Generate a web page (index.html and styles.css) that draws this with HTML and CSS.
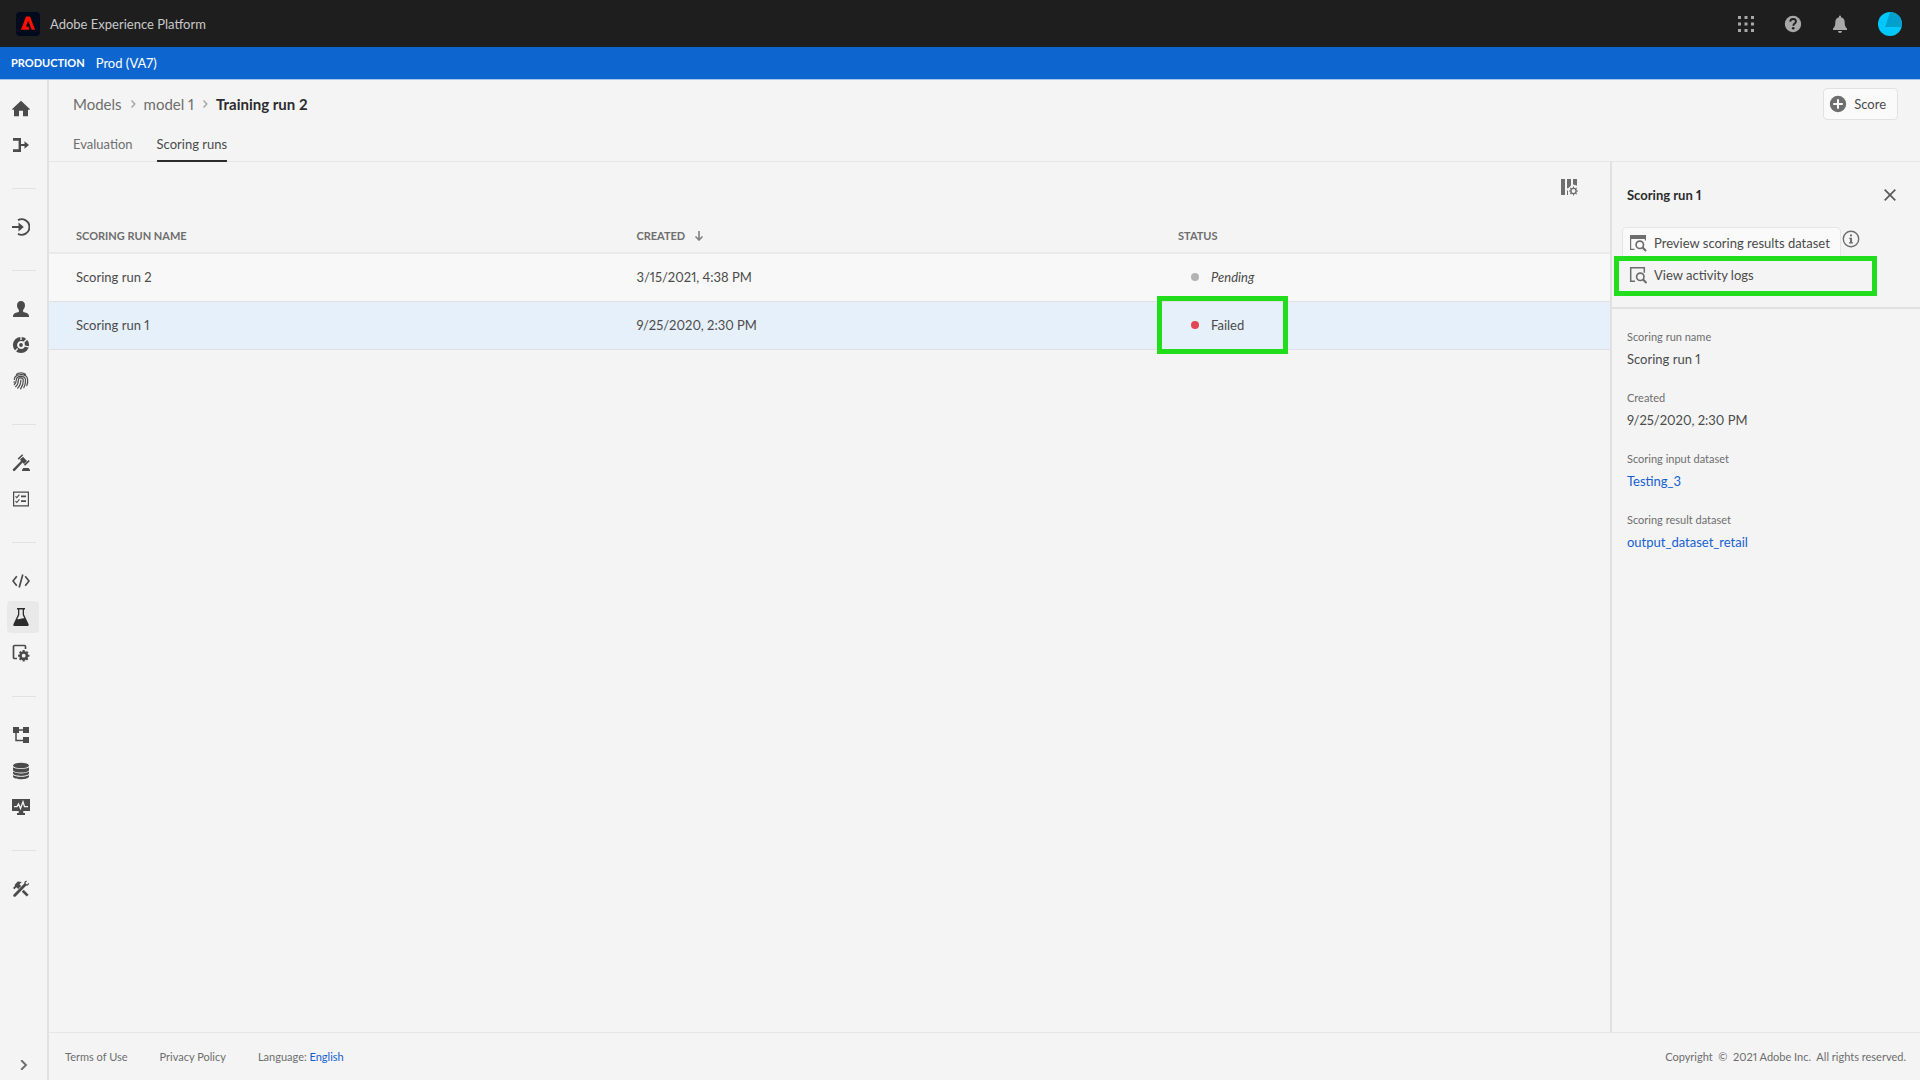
FILE: index.html
```html
<!DOCTYPE html>
<html lang="en">
<head>
    <meta charset="UTF-8" />
    <meta name="viewport" content="width=device-width, initial-scale=1" />
    <title>Adobe Experience Platform</title>
    <link rel="stylesheet" href="styles.css">
</head>
<body>
    <header class="topbar">
        <svg class="logo" viewBox="0 0 24 24" width="24" height="24">
            <rect width="24" height="24" rx="4" fill="#000b1d" />
            <path d="M10 4.500h4l5.200 13.200h-3.600l-3.400-8.900-2.200 5.700h2.300l1.100 3.200H4.900z" fill="#fa0f00" />
        </svg>
        <span class="product">Adobe Experience Platform</span>
        <div class="tools">
            <button class="tool" aria-label="Apps">
                <svg viewBox="0 0 18 18" width="18" height="18">
                    <path d="M1 1h3v3H1zM7.500 1h3v3h-3zM14 1h3v3h-3zM1 7.500h3v3H1zM7.500 7.500h3v3h-3zM14 7.500h3v3h-3zM1 14h3v3H1zM7.500 14h3v3h-3zM14 14h3v3h-3z" />
                </svg>
            </button>
            <button class="tool" aria-label="Help">
                <svg viewBox="0 0 18 18" width="18" height="18">
                    <circle cx="9" cy="9" r="8.200" />
                    <path d="M6.200 6.600C6.400 4.900 7.500 4 9.100 4c1.700 0 2.800 1 2.800 2.400 0 2.100-2.600 2.100-2.600 4.300" fill="none" stroke="#1e1e1e" stroke-width="1.900" />
                    <circle cx="9.200" cy="13.300" r="1.300" fill="#1e1e1e" />
                </svg>
            </button>
            <button class="tool" aria-label="Notifications">
                <svg viewBox="0 0 18 18" width="18" height="18">
                    <path d="M8 1.600a1 1 0 0 1 2 0v.7c2.600.5 3.700 2.500 3.700 5.200 0 3.500.9 4.800 2.300 6v1.400H2v-1.400c1.400-1.200 2.300-2.500 2.300-6 0-2.700 1.100-4.700 3.700-5.200zM7 16h4a2 2 0 0 1-4 0z" />
                </svg>
            </button>
            <button class="tool" aria-label="Account">
                <svg viewBox="0 0 24 24" width="24" height="24">
                    <circle cx="12" cy="12" r="12" fill="#00c8ff" />
                    <path d="M12.200 0A12 12 0 0 1 23.600 15L7 15z" fill="#009fcc" />
                </svg>
            </button>
        </div>
    </header>

    <div class="sandbox">
        <span class="sandbox-type">PRODUCTION</span>
        <span class="sandbox-name">Prod (VA7)</span>
    </div>

    <div class="shell">
        <nav class="rail" aria-label="Main">
            <a class="rail-item" href="#" aria-label="Home">
                <svg viewBox="0 0 18 18" width="18" height="18"><path d="M9 .7l8.800 8.200c.3.300.1.800-.3.800H16v6.600h-5v-5.500H7v5.500H2V9.700H.5c-.4 0-.6-.5-.3-.8z" /></svg>
            </a>
            <a class="rail-item" href="#" aria-label="Workflows">
                <svg viewBox="0 0 18 18" width="18" height="18"><path d="M1 2h8v5.900h3.500V5.200L17 9l-4.500 3.800v-2.700H9V16H1v-2.700h5.600V4.700H1z" /></svg>
            </a>
            <hr class="rail-line">
            <a class="rail-item" href="#" aria-label="Sources">
                <svg viewBox="0 0 18 18" width="18" height="18"><path d="M6 2.100a7.800 7.800 0 1 1 0 13.800" fill="none" stroke="#4b4b4b" stroke-width="1.900" /><path d="M0 8.100h6.500V4.600L11.800 9l-5.300 4.400V9.900H0z" /></svg>
            </a>
            <hr class="rail-line">
            <a class="rail-item" href="#" aria-label="Profiles">
                <svg viewBox="0 0 18 18" width="18" height="18"><path d="M9 1c2.500 0 4 1.700 4 4.300 0 2-.9 3.600-1.900 4.600v1.300c0 .6.300.9 1 1.100 3 .7 4.900 1.700 4.900 3.700v1H1v-1c0-2 1.900-3 4.900-3.700.7-.2 1-.5 1-1.100V9.900C5.900 8.900 5 7.300 5 5.300 5 2.700 6.500 1 9 1z" /></svg>
            </a>
            <a class="rail-item" href="#" aria-label="Segments">
                <svg viewBox="0 0 18 18" width="18" height="18"><circle cx="9" cy="9" r="6" fill="none" stroke="#4b4b4b" stroke-width="4.200" /><circle cx="9" cy="9" r="1.900" /><path d="M9 4V0M10.800 7.200L16 2M12 9.800l5.500 1.300M5.700 12.500L2.500 16" stroke="#f4f4f4" stroke-width="1.300" /></svg>
            </a>
            <a class="rail-item" href="#" aria-label="Identities">
                <svg viewBox="0 0 18 18" width="18" height="18"><g fill="none" stroke="#4b4b4b" stroke-width="1.200" stroke-linecap="round"><path d="M4.500 2.300C7 .4 11 .4 13.500 2.300M2.300 7.500C2.800 1.400 14.600.8 15.600 7.300c.3 2.300 0 4.200-.8 6.300M2.300 12.500c1.800-1.600 2-3.200 2.100-5 .4-4.200 8.600-4.400 9.100.2.200 3-.4 5.400-1.700 8M3.600 14.700c2.300-2 2.800-4.300 2.800-7 .2-2.300 4.600-2.500 4.900.3.200 3.500-.9 6.300-2.700 8.900M5.700 16.200C8 13.800 8.900 11.200 8.900 8M2 10.300l.3-.5" /></g></svg>
            </a>
            <hr class="rail-line">
            <a class="rail-item" href="#" aria-label="Policies">
                <svg viewBox="0 0 18 18" width="18" height="18"><path d="M8 5.500l3-2.800 4 4.300-3 2.900-1.400-1.500-7.700 8.300c-1.200 1.200-2.900-.4-1.800-1.600L9 7z" /><path d="M6.200 5.100L10.700.8M12.500 11.100l4.700-4.500" stroke="#4b4b4b" stroke-width="1.500" /><path d="M10 17v-1.300L11.300 14h5.200l1.500 1.700V17z" /></svg>
            </a>
            <a class="rail-item" href="#" aria-label="Audits">
                <svg viewBox="0 0 18 18" width="18" height="18"><path d="M1.600 2.100h14.800v13.800H1.600z" fill="none" stroke="#4b4b4b" stroke-width="1.200" /><path d="M9 5.500h5v1.800H9zM9 10.300h5v1.800H9z" /><path d="M3.500 6.400l1.300 1.300L7.400 4.600M3.500 11.200l1.300 1.300 2.600-3.100" fill="none" stroke="#4b4b4b" stroke-width="1.100" /></svg>
            </a>
            <hr class="rail-line">
            <a class="rail-item" href="#" aria-label="Notebooks">
                <svg viewBox="0 0 18 18" width="18" height="18"><path d="M4.800 4.300L1 9l3.800 4.700M13.200 4.300L17 9l-3.800 4.700M10.800 2.600L7.200 15.400" fill="none" stroke="#4b4b4b" stroke-width="1.700" /></svg>
            </a>
            <a class="rail-item current" href="#" aria-label="Models">
                <svg viewBox="0 0 18 18" width="18" height="18"><path d="M5 0h8v1.600h-1v5l4.500 9.300c.5 1.100 0 2.100-1.200 2.100H2.700c-1.200 0-1.700-1-1.200-2.100L6 6.600v-5H5zM7.300 1.600v5.300l-2 4.200c2.600.8 4.300-1.400 7.100-.6l-1.700-3.600V1.600z" fill-rule="evenodd" /></svg>
            </a>
            <a class="rail-item" href="#" aria-label="Services">
                <svg viewBox="0 0 18 18" width="18" height="18"><path d="M5 14.500H2.500a1 1 0 0 1-1-1v-11a1 1 0 0 1 1-1h10a1 1 0 0 1 1 1V5" fill="none" stroke="#4b4b4b" stroke-width="1.700" /><circle cx="11.700" cy="11.700" r="3.200" fill="none" stroke="#4b4b4b" stroke-width="2.600" /><path d="M11.700 6v2M11.700 15.400v2M6 11.700h2M15.400 11.700h2M7.700 7.700l1.500 1.500M14.200 14.200l1.500 1.500M15.700 7.700l-1.500 1.500M9.200 14.200l-1.500 1.500" stroke="#4b4b4b" stroke-width="2.100" /></svg>
            </a>
            <hr class="rail-line">
            <a class="rail-item" href="#" aria-label="Schemas">
                <svg viewBox="0 0 18 18" width="18" height="18"><path d="M1 1h6v6H1zM11 1h6v6h-6zM11 11h6v6h-6z" /><path d="M6 4h6M4 6v8.500h8" fill="none" stroke="#4b4b4b" stroke-width="1.500" /></svg>
            </a>
            <a class="rail-item" href="#" aria-label="Datasets">
                <svg viewBox="0 0 18 18" width="18" height="18"><ellipse cx="9" cy="3.500" rx="8" ry="2.800" /><path d="M1 5.200C3 7.500 15 7.500 17 5.200V8.200c-1 3.200-15 3.200-16 0zM1 9.600c2 2.400 14 2.400 16 0v2c-1 3.200-15 3.200-16 0zM1 13c2 2.400 14 2.400 16 0v1.800c-1 3.300-15 3.300-16 0z" /></svg>
            </a>
            <a class="rail-item" href="#" aria-label="Monitoring">
                <svg viewBox="0 0 18 18" width="18" height="18"><path d="M0 1h18v12h-6.700v2H13v2H5v-2h1.700v-2H0z" /><path d="M2 8.600h3L6.500 6l2 4.500L11 3.800l1.500 4.800H16" fill="none" stroke="#f4f4f4" stroke-width="1.300" /></svg>
            </a>
            <hr class="rail-line">
            <a class="rail-item" href="#" aria-label="Administration">
                <svg viewBox="0 0 18 18" width="18" height="18"><path d="M1 8l1.400 1.300 2-2 1.700 1.700 3-3-1.600-1.700L9.800 2 5.700 1.500 2.700 4.700 3 5.800z" /><path d="M9.800 11.700l4.900 4.900 1.900-1.900-4.900-4.900zM1.600 14.400L12.300 3.500c-.2-2 1.300-3 2.800-2.600L13.300 3l1.600 1.600 2-1.900c.5 1.700-.8 3.200-2.600 2.900L3.600 16.400c-1.500 1.200-3.200-.6-2-2z" /></svg>
            </a>
            <button class="expand" aria-label="Expand menu">
                <svg viewBox="0 0 10 10" width="10" height="10"><path d="M2.700.8L7 5 2.700 9.200" fill="none" stroke="#6e6e6e" stroke-width="1.900" stroke-linecap="round" /></svg>
            </button>
        </nav>

        <div class="page">
            <div class="page-head">
                <div class="title-row">
                    <nav class="crumbs" aria-label="Breadcrumb">
                        <a href="#">Models</a>
                        <svg viewBox="0 0 8 8" width="8" height="8"><path d="M2.500.6L5.800 4 2.500 7.400" fill="none" stroke="#a8a8a8" stroke-width="1.500" /></svg>
                        <a href="#">model 1</a>
                        <svg viewBox="0 0 8 8" width="8" height="8"><path d="M2.500.6L5.800 4 2.500 7.400" fill="none" stroke="#a8a8a8" stroke-width="1.500" /></svg>
                        <h1>Training run 2</h1>
                    </nav>
                    <button class="score">
                        <svg viewBox="0 0 18 18" width="18" height="18"><circle cx="9" cy="9" r="8.200" /><path d="M9 4.200v9.600M4.200 9h9.600" stroke="#fafafa" stroke-width="2" /></svg>
                        Score
                    </button>
                </div>
                <div class="tabs">
                    <a class="tab" href="#">Evaluation</a>
                    <a class="tab selected" href="#">Scoring runs</a>
                </div>
            </div>

            <div class="content">
                <main class="runs">
                    <div class="table-tools">
                        <button class="icon-button" aria-label="Column settings">
                            <svg viewBox="0 0 18 18" width="18" height="18"><path d="M1 1h4v16H1zM7 1h4v6.500L8.500 10 7 10.500zM13 1h4v7l-1-.8-3-.7zM7 12.500V17h1v-4.500z" /><circle cx="13.500" cy="13" r="2.600" fill="none" stroke="#6e6e6e" stroke-width="1.400" /><path d="M13.500 8.500v1.800M13.500 15.700v1.800M9 13h1.800M16.200 13H18M10.300 9.800l1.200 1.200M15.500 15l1.200 1.200M16.700 9.800L15.500 11M11.500 15l-1.200 1.200" stroke="#6e6e6e" stroke-width="1.100" /></svg>
                        </button>
                    </div>
                    <table class="run-table">
                        <thead>
                            <tr>
                                <th class="col-name">Scoring run name</th>
                                <th class="col-created">Created
                                    <svg class="sort" viewBox="0 0 10 10" width="10" height="10"><path d="M5 0v9M1.500 5.500L5 9l3.500-3.500" fill="none" stroke="#808080" stroke-width="1.600" /></svg>
                                </th>
                                <th>Status</th>
                            </tr>
                        </thead>
                        <tbody>
                            <tr>
                                <td>Scoring run 2</td>
                                <td>3/15/2021, 4:38 PM</td>
                                <td><span class="status pending">Pending</span></td>
                            </tr>
                            <tr class="active">
                                <td>Scoring run 1</td>
                                <td>9/25/2020, 2:30 PM</td>
                                <td><span class="status failed">Failed<span class="mark mark-status"></span></span></td>
                            </tr>
                        </tbody>
                    </table>
                </main>

                <aside class="details">
                    <div class="details-head">
                        <div class="details-title">
                            <h2>Scoring run 1</h2>
                            <button class="icon-button" aria-label="Close">
                                <svg viewBox="0 0 12 12" width="12" height="12"><path d="M.7.700l10.600 10.600M11.300.7L.7 11.300" stroke="#5a5a5a" stroke-width="1.700" /></svg>
                            </button>
                        </div>
                        <div class="action-row">
                            <button class="action outlined">
                                <svg viewBox="0 0 18 18" width="18" height="18"><path d="M1 1h16v4H1z" /><path d="M5.500 15.400H1.600V3h14.800v3.500" fill="none" stroke="#6e6e6e" stroke-width="1.200" /><circle cx="10.800" cy="10.800" r="3.700" fill="none" stroke="#6e6e6e" stroke-width="1.700" /><path d="M13.300 13.300l3.700 3.700" stroke="#6e6e6e" stroke-width="2.200" /></svg>
                                Preview scoring results dataset
                            </button>
                            <button class="icon-button" aria-label="More information">
                                <svg viewBox="0 0 18 18" width="18" height="18"><circle cx="9" cy="9" r="7.700" fill="none" stroke="#6e6e6e" stroke-width="1.400" /><circle cx="9" cy="5.400" r="1.100" /><path d="M7.200 7.700H10v4.500h1v1.200H7v-1.200h1V9h-.8z" /></svg>
                            </button>
                        </div>
                        <button class="action">
                            <svg viewBox="0 0 18 18" width="18" height="18"><path d="M6 15.300H1.700V1.700h13.600v5" fill="none" stroke="#6e6e6e" stroke-width="1.500" /><circle cx="11.300" cy="10.800" r="3.700" fill="none" stroke="#6e6e6e" stroke-width="1.700" /><path d="M13.800 13.300l3.700 3.700" stroke="#6e6e6e" stroke-width="2.200" /></svg>
                            View activity logs
                            <span class="mark mark-logs"></span>
                        </button>
                    </div>
                    <dl class="facts">
                        <dt>Scoring run name</dt>
                        <dd>Scoring run 1</dd>
                        <dt>Created</dt>
                        <dd>9/25/2020, 2:30 PM</dd>
                        <dt>Scoring input dataset</dt>
                        <dd><a href="#">Testing_3</a></dd>
                        <dt>Scoring result dataset</dt>
                        <dd><a href="#">output_dataset_retail</a></dd>
                    </dl>
                </aside>
            </div>

            <footer class="footer">
                <a href="#">Terms of Use</a>
                <a href="#">Privacy Policy</a>
                <span>Language: <a class="language" href="#">English</a></span>
                <span class="copyright">Copyright &nbsp;©&nbsp; 2021 Adobe Inc.&nbsp; All rights reserved.</span>
            </footer>
        </div>
    </div>
</body>
</html>
```
FILE: styles.css
```css
* {
    box-sizing: border-box;
}
body {
    margin: 0;
    min-height: 100vh;
    display: flex;
    flex-direction: column;
    font-family: Lato, "Open Sans", sans-serif;
    font-size: 13px;
    font-variant-numeric: proportional-nums;
    line-height: 18px;
    color: #4b4b4b;
    background-color: #f4f4f4;
}
a {
    color: inherit;
    text-decoration: none;
}
button {
    font: inherit;
    color: inherit;
    background: none;
    border: none;
    padding: 0;
    cursor: pointer;
}
svg {
    display: block;
    flex: none;
    fill: #6e6e6e;
}
h1, h2 {
    margin: 0;
    color: #2c2c2c;
}

/* top bars */
.topbar {
    display: flex;
    align-items: center;
    height: 47px;
    padding: 0 18px 0 16px;
    background-color: #1e1e1e;
    color: #c8c8c8;
}
.product {
    margin-left: 10px;
}
.tools {
    display: flex;
    align-items: center;
    gap: 29px;
    margin-left: auto;
}
.tool svg {
    fill: #a8a8a8;
}
.sandbox {
    display: flex;
    align-items: center;
    gap: 11px;
    height: 33px;
    padding: 0 11px;
    background-color: #0d66d0;
    border-bottom: 1px solid #a5c5ea;
    color: #fff;
}
.sandbox-type {
    font-size: 11px;
    font-weight: bold;
}

/* left rail */
.shell {
    flex: 1;
    display: flex;
}
.rail {
    display: flex;
    flex-direction: column;
    width: 49px;
    padding: 11px 8px 10px 7px;
    border-right: 2px solid #e1e1e1;
}
.rail-item {
    display: flex;
    align-items: center;
    justify-content: center;
    height: 32px;
    margin: 2px 0;
    padding-right: 4px;
    border-radius: 4px;
}
.rail-item svg {
    fill: #4b4b4b;
}
.rail-item.current {
    background-color: #e9e9e9;
}
.rail-item.current svg {
    fill: #2c2c2c;
}
.rail-line {
    width: 24px;
    height: 1px;
    margin: 25px 0 20px 5px;
    border: none;
    background-color: #e1e1e1;
}
.expand {
    align-self: center;
    margin-top: auto;
    padding-left: 2px;
}

/* page header */
.page {
    flex: 1;
    min-width: 0;
    display: flex;
    flex-direction: column;
}
.page-head {
    padding: 8px 22px 0 24px;
    border-bottom: 1px solid #e6e6e6;
}
.title-row {
    display: flex;
    align-items: center;
    justify-content: space-between;
}
.crumbs {
    display: flex;
    align-items: center;
    gap: 7px;
    font-size: 15px;
    color: #6e6e6e;
}
.crumbs h1 {
    font-size: 15px;
}
.score {
    display: flex;
    align-items: center;
    gap: 7px;
    height: 32px;
    padding: 0 11px 0 5px;
    border: 1px solid #e1e1e1;
    border-radius: 4px;
    background-color: #fafafa;
}
.tabs {
    display: flex;
    gap: 24px;
    margin-bottom: -1px;
}
.tab {
    padding: 15px 0 7px;
    border-bottom: 2px solid transparent;
    color: #6e6e6e;
}
.tab.selected {
    color: #4b4b4b;
    border-color: #2c2c2c;
}

/* scoring runs */
.content {
    flex: 1;
    display: flex;
}
.runs {
    flex: 1;
    min-width: 0;
}
.table-tools {
    display: flex;
    justify-content: flex-end;
    padding: 16px 32px 19px;
}
.run-table {
    width: 100%;
    border-collapse: collapse;
    table-layout: fixed;
}
.run-table th {
    height: 38px;
    padding: 4px 27px 0;
    text-align: left;
    font-size: 11px;
    text-transform: uppercase;
    color: #6e6e6e;
    border-bottom: 2px solid #eaeaea;
}
.col-name {
    width: 35.9%;
}
.col-created {
    width: 34.7%;
}
.sort {
    display: inline-block;
    margin-left: 6px;
    vertical-align: -1px;
}
.run-table td {
    height: 48px;
    padding: 0 27px;
    background-color: #f8f8f8;
    border-bottom: 1px solid #e1e1e1;
}
.run-table .active td {
    background-color: #e6f0fa;
}
.status {
    position: relative;
    display: flex;
    align-items: center;
    gap: 12px;
    margin-left: 13px;
}
.status::before {
    content: "";
    width: 8px;
    height: 8px;
    border-radius: 50%;
    background-color: #b3b3b3;
}
.pending {
    font-style: italic;
}
.failed::before {
    background-color: #e34850;
}

/* highlight boxes */
.mark {
    position: absolute;
    border: 5px solid #22dd1c;
    pointer-events: none;
}
.mark-status {
    top: -20px;
    left: -34px;
    width: 131px;
    height: 58px;
}
.mark-logs {
    top: -4px;
    left: -9px;
    width: 263px;
    height: 40px;
}

/* details panel */
.details {
    width: 310px;
    border-left: 2px solid #e1e1e1;
}
.details-head {
    padding: 24px 24px 16px 10px;
    border-bottom: 2px solid #e1e1e1;
}
.details-title {
    display: flex;
    align-items: center;
    justify-content: space-between;
    padding-left: 5px;
    margin-bottom: 23px;
}
.details h2 {
    font-size: 13px;
}
.action-row {
    display: flex;
    align-items: flex-start;
    gap: 1px;
}
.action-row .icon-button {
    margin-top: 3px;
}
.action {
    position: relative;
    display: flex;
    align-items: center;
    gap: 7px;
    height: 32px;
    padding: 0 10px 0 6px;
    border: 1px solid transparent;
    border-radius: 4px;
    white-space: nowrap;
}
.outlined {
    border-color: #e6e6e6;
    background-color: #fafafa;
}
.facts {
    margin: 0;
    padding: 19px 15px;
}
.facts dt {
    font-size: 11px;
    color: #6e6e6e;
    margin-bottom: 4px;
}
.facts dd {
    margin: 0 0 21px;
}
.facts a, .language {
    color: #1460d2;
}

/* footer */
.footer {
    display: flex;
    align-items: center;
    gap: 32px;
    height: 48px;
    padding: 0 14px 0 16px;
    border-top: 1px solid #e6e6e6;
    font-size: 11px;
    color: #6e6e6e;
}
.copyright {
    margin-left: auto;
}
```
